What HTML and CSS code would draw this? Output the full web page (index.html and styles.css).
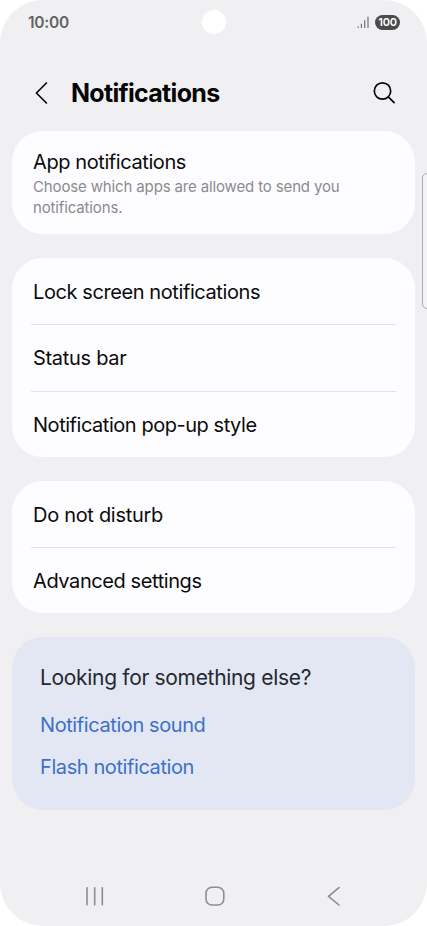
FILE: index.html
```html
<!DOCTYPE html>
<html lang="en">
<head>
<meta charset="utf-8">
<title>Notifications</title>
<link rel="stylesheet" href="styles.css">
</head>
<body>
<div class="phone">
  <div class="status">
    <span class="clock">10:00</span>
    <span class="camera"></span>
    <div class="indicators">
      <svg class="signal" width="12" height="13" viewBox="0 0 12 13"><path d="M1.2 10.8V11.5M4.4 8V11.5M7.7 4.5V11.5M11 1V11.5"/></svg>
      <span class="battery">100</span>
    </div>
  </div>
  <header class="header">
    <svg class="back" width="13" height="24" viewBox="0 0 13 24"><path d="M11.4 2 1.4 12l10 10"/></svg>
    <h1 class="title">Notifications</h1>
    <svg class="search" width="24" height="24" viewBox="0 0 24 24"><circle cx="10.5" cy="10" r="8.2"/><path d="m16.3 15.8 5.8 5.8"/></svg>
  </header>
  <main class="content">
    <section class="card app">
      <h2 class="label">App notifications</h2>
      <p class="hint">Choose which apps are allowed to send you<br>notifications.</p>
    </section>
    <section class="card">
      <div class="row"><span class="label">Lock screen notifications</span></div>
      <div class="row"><span class="label loose">Status bar</span></div>
      <div class="row"><span class="label tight">Notification pop-up style</span></div>
    </section>
    <section class="card">
      <div class="row"><span class="label loose">Do not disturb</span></div>
      <div class="row"><span class="label">Advanced settings</span></div>
    </section>
    <section class="card related">
      <h2 class="question">Looking for something else?</h2>
      <a class="link">Notification sound</a>
      <a class="link">Flash notification</a>
    </section>
  </main>
  <nav class="nav">
    <svg width="20" height="20" viewBox="0 0 20 20"><path d="M2 1.8v17M9.7 1.8v17M17.3 1.8v17"/></svg>
    <svg width="20" height="20" viewBox="0 0 20 20"><rect x="1" y="1.2" width="17.8" height="17.8" rx="6"/></svg>
    <svg width="20" height="20" viewBox="0 0 20 20"><path d="M15 1.6 4.5 10.3 15 19"/></svg>
  </nav>
  <span class="edge-handle"></span>
</div>
</body>
</html>
```
FILE: styles.css
```css
* { box-sizing: border-box; }
body { margin: 0; background: #fff; font-family: Inter, Roboto, sans-serif; }
h1, h2, p { margin: 0; font-weight: 400; }
svg { display: block; fill: none; stroke-linecap: round; stroke-linejoin: round; flex: none; }
.phone {
  position: relative;
  display: flex;
  flex-direction: column;
  width: 427px;
  height: 926px;
  overflow: hidden;
  background: #f0f0f2;
  border-radius: 43px;
}
.status {
  display: grid;
  grid-template-columns: 1fr 24px 1fr;
  align-items: center;
  height: 44px;
  padding: 0 27px 0 28px;
}
.clock { font-size: 15.5px; font-weight: 600; letter-spacing: -0.25px; color: #626264; }
.camera { width: 24px; height: 24px; margin-left: -0.5px; border-radius: 50%; background: #fff; }
.indicators { display: flex; align-items: center; justify-content: flex-end; gap: 6px; }
.signal { stroke: #727274; stroke-width: 1.2; }
.battery {
  width: 25px;
  height: 15px;
  border-radius: 8px;
  background: #4b4b4b;
  color: #fff;
  font-size: 11px;
  line-height: 15px;
  font-weight: 600;
  letter-spacing: -0.2px;
  text-align: center;
}
.header { display: flex; align-items: center; height: 87px; padding: 11px 31px 0 35px; }
.back { stroke: #080808; stroke-width: 1.7; }
.title { margin: 0 0 0 23px; font-size: 25px; font-weight: 700; letter-spacing: -0.7px; color: #050505; }
.search { margin-left: auto; stroke: #080808; stroke-width: 1.7; }
.content { display: flex; flex-direction: column; gap: 24px; padding: 0 12px; }
.card { border-radius: 31px; background: #fdfdff; padding: 0 19px; }
.app { height: 103px; padding: 18px 21px 0; }
.label { font-size: 20px; line-height: 26px; letter-spacing: -0.41px; color: #0b0b0b; white-space: nowrap; }
.loose { letter-spacing: -0.3px; }
.tight { letter-spacing: -0.46px; }
.hint { font-size: 15px; line-height: 20.5px; letter-spacing: -0.14px; color: #8b8b8d; margin-top: 2px; white-space: nowrap; }
.row { display: flex; align-items: center; height: 66.3px; padding: 1px 2px 0; }
.row + .row { border-top: 1px solid #e3e3e5; }
.related { display: flex; flex-direction: column; align-items: flex-start; height: 173px; padding: 27px 28px 0; background: #e3e7f4; }
.question { font-size: 21px; line-height: 28px; letter-spacing: -0.32px; color: #26282d; }
.link { font-size: 20px; line-height: 28px; letter-spacing: -0.41px; margin-top: 14px; color: #3e70c9; }
.question + .link { margin-top: 19px; }
.nav { display: flex; justify-content: space-between; margin-top: auto; padding: 0 83px 20px 85px; }
.nav svg { stroke: #8d8d8f; stroke-width: 1.6; }
.edge-handle {
  position: absolute;
  top: 173px;
  right: -6px;
  width: 11px;
  height: 136px;
  border: 1px solid #ababad;
  border-radius: 5px;
  background: #f4f4f6;
}
```
